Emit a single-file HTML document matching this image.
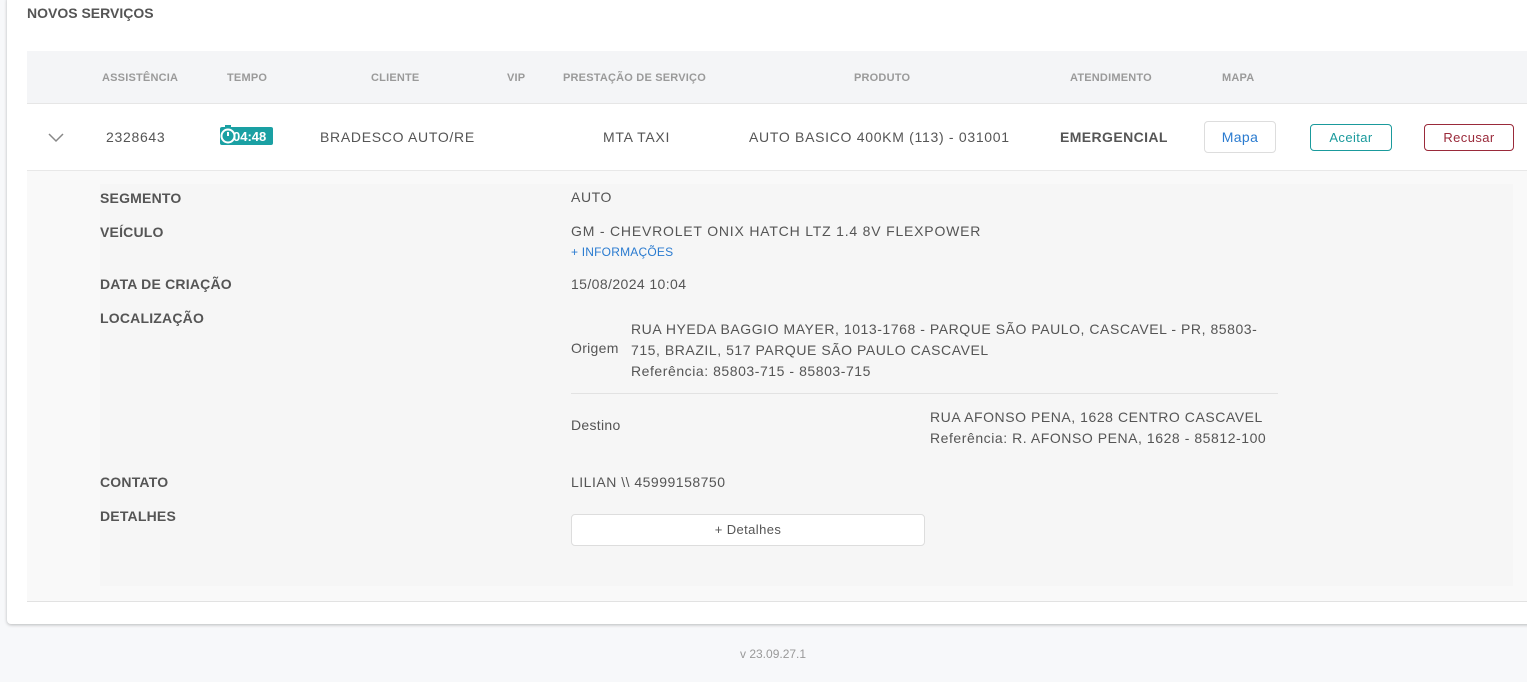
<!DOCTYPE html>
<html><head><meta charset="utf-8"><style>
*{margin:0;padding:0;box-sizing:border-box}
body{width:1527px;height:682px;background:#f7f8fa;font-family:"Liberation Sans",sans-serif;position:relative;overflow:hidden;color:#555}
.a{position:absolute;white-space:nowrap}
.card{position:absolute;left:7px;top:-4px;width:1530px;height:628px;background:#fff;border-radius:4px;box-shadow:0 1px 3px rgba(0,0,0,.25)}
.th{font-size:11px;font-weight:bold;color:#9a9a9a;top:72px;letter-spacing:0.2px}
.td{font-size:14px;color:#555;top:129px;letter-spacing:0.7px}
.lb{font-size:14px;font-weight:bold;color:#555;left:100px;letter-spacing:0.2px}
.v{font-size:14px;color:#555;left:571px;letter-spacing:0.6px}
.btn{position:absolute;border-radius:4px;font-size:13px;text-align:center;background:#fff;letter-spacing:0.4px}
</style></head><body>
<div class="card"></div>
<div class="a" style="left:27px;top:5px;font-size:14px;font-weight:bold;color:#555">NOVOS SERVIÇOS</div>
<div class="a" style="left:27px;top:51px;width:1500px;height:53px;background:#f4f5f7;border-bottom:1px solid #e6e6e6"></div>
<div class="a th" style="left:102px">ASSISTÊNCIA</div>
<div class="a th" style="left:227px">TEMPO</div>
<div class="a th" style="left:371px">CLIENTE</div>
<div class="a th" style="left:507px">VIP</div>
<div class="a th" style="left:563px">PRESTAÇÃO DE SERVIÇO</div>
<div class="a th" style="left:854px">PRODUTO</div>
<div class="a th" style="left:1070px">ATENDIMENTO</div>
<div class="a th" style="left:1222px">MAPA</div>
<svg class="a" style="left:47px;top:131px" width="18" height="12" viewBox="0 0 18 12"><path d="M2 3l7 7 7-7" fill="none" stroke="#888" stroke-width="1.5"/></svg>
<div class="a td" style="left:106px">2328643</div>
<div class="a" style="left:220px;top:127px;width:53px;height:18px;background:#1aa0a3;border-radius:2px"></div>
<svg class="a" style="left:219px;top:122px" width="18" height="24" viewBox="0 0 18 24"><circle cx="9" cy="14" r="6.5" fill="#1aa0a3" stroke="#fff" stroke-width="2"/><rect x="6" y="3" width="6" height="3" fill="#1aa0a3"/><path d="M9 14V10" stroke="#fff" stroke-width="2"/></svg>
<div class="a" style="left:233px;top:129px;font-size:13px;font-weight:bold;color:#fff">04:48</div>
<div class="a td" style="left:320px">BRADESCO AUTO/RE</div>
<div class="a td" style="left:603px">MTA TAXI</div>
<div class="a td" style="left:749px">AUTO BASICO 400KM (113) - 031001</div>
<div class="a td" style="left:1060px;font-weight:bold;letter-spacing:0.4px">EMERGENCIAL</div>
<div class="btn" style="left:1204px;top:121px;width:72px;height:32px;border:1px solid #ddd;color:#2a7bd0;line-height:30px;font-size:14px">Mapa</div>
<div class="btn" style="left:1310px;top:124px;width:82px;height:27px;border:1px solid #1a9a9c;color:#1a9a9c;line-height:25px">Aceitar</div>
<div class="btn" style="left:1424px;top:124px;width:90px;height:27px;border:1px solid #9a2a3a;color:#9a2a3a;line-height:25px">Recusar</div>
<div class="a" style="left:27px;top:170px;width:1500px;height:432px;background:#f9f9f9;border-top:1px solid #e8e8e8;border-bottom:1px solid #e2e2e2"></div>
<div class="a" style="left:100px;top:184px;width:1413px;height:402px;background:#f6f6f6"></div>
<div class="a lb" style="top:190px">SEGMENTO</div>
<div class="a v" style="top:189px">AUTO</div>
<div class="a lb" style="top:224px">VEÍCULO</div>
<div class="a v" style="top:223px;letter-spacing:0.8px">GM - CHEVROLET ONIX HATCH LTZ 1.4 8V FLEXPOWER</div>
<div class="a" style="left:571px;top:245px;font-size:12px;color:#2a7bd0;letter-spacing:0.2px">+ INFORMAÇÕES</div>
<div class="a lb" style="top:276px">DATA DE CRIAÇÃO</div>
<div class="a v" style="top:276px;letter-spacing:0.4px">15/08/2024 10:04</div>
<div class="a lb" style="top:310px">LOCALIZAÇÃO</div>
<div class="a v" style="top:340px;letter-spacing:0.3px">Origem</div>
<div class="a" style="left:631px;top:319px;font-size:14px;line-height:21px;color:#555;letter-spacing:0.55px">RUA HYEDA BAGGIO MAYER, 1013-1768 - PARQUE SÃO PAULO, CASCAVEL - PR, 85803-<br>715, BRAZIL, 517 PARQUE SÃO PAULO CASCAVEL<br>Referência: 85803-715 - 85803-715</div>
<div class="a" style="left:571px;top:393px;width:707px;height:1px;background:#e2e2e2"></div>
<div class="a v" style="top:417px;letter-spacing:0.3px">Destino</div>
<div class="a" style="left:930px;top:407px;font-size:14px;line-height:21px;color:#555;letter-spacing:0.55px">RUA AFONSO PENA, 1628 CENTRO CASCAVEL<br>Referência: R. AFONSO PENA, 1628 - 85812-100</div>
<div class="a lb" style="top:474px">CONTATO</div>
<div class="a v" style="top:474px;letter-spacing:0.5px">LILIAN \\ 45999158750</div>
<div class="a lb" style="top:508px">DETALHES</div>
<div class="btn" style="left:571px;top:514px;width:354px;height:32px;border:1px solid #ddd;color:#555;line-height:30px">+ Detalhes</div>
<div class="a" style="left:740px;top:647px;font-size:12px;color:#999">v 23.09.27.1</div>
</body></html>
